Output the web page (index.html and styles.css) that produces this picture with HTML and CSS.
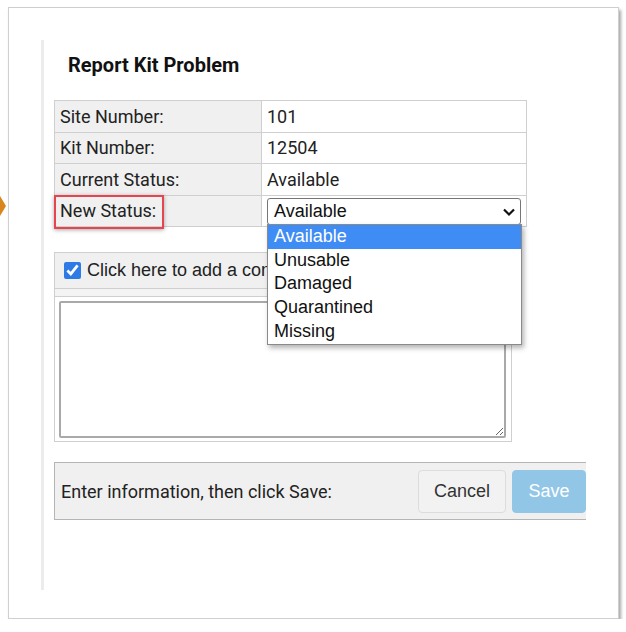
FILE: index.html
```html
<!DOCTYPE html>
<html>
<head>
<meta charset="utf-8">
<title>Report Kit Problem</title>
<link rel="stylesheet" href="styles.css">
</head>
<body>
	<div class="mark"></div>
	<div class="frame">
		<div class="panel">
			<h2 class="title">Report Kit Problem</h2>
			<table class="info">
				<tr>
					<td class="lbl">Site Number:</td>
					<td class="val">101</td>
				</tr>
				<tr>
					<td class="lbl">Kit Number:</td>
					<td class="val">12504</td>
				</tr>
				<tr>
					<td class="lbl">Current Status:</td>
					<td class="val">Available</td>
				</tr>
				<tr>
					<td class="lbl hilite">New Status:<span class="redbox"></span></td>
					<td class="val">
						<div class="select">
							<span>Available</span>
							<svg class="chev" width="14" height="10" viewBox="0 0 14 10"><path d="M2 2.5 L7 7.5 L12 2.5" fill="none" stroke="#111" stroke-width="2.2"/></svg>
							<ul class="options">
								<li class="sel">Available</li>
								<li>Unusable</li>
								<li>Damaged</li>
								<li>Quarantined</li>
								<li>Missing</li>
							</ul>
						</div>
					</td>
				</tr>
			</table>

			<div class="comment">
				<div class="comment-head">
					<input type="checkbox" checked> <span>Click here to add a comment</span>
				</div>
				<div class="comment-strip"></div>
				<textarea></textarea>
			</div>

			<div class="footer">
				<span class="hint">Enter information, then click Save:</span>
				<div class="btns">
					<button class="cancel">Cancel</button>
					<button class="save">Save</button>
				</div>
			</div>
		</div>
	</div>
</body>
</html>
```

FILE: styles.css
```css
body {
	margin: 0;
	background: #fff;
	font-family: Roboto, "Liberation Sans", sans-serif;
	color: #222;
}

.mark {
	position: absolute;
	left: 0;
	top: 196px;
	width: 0;
	height: 0;
	border-top: 10px solid transparent;
	border-bottom: 10px solid transparent;
	border-left: 6px solid #d9861c;
}

.frame {
	box-sizing: border-box;
	width: 611px;
	height: 612px;
	margin: 7px 0 0 8px;
	padding: 32px 0 0 32px;
	border: 1px solid #cfcfcf;
	box-shadow: 2px 3px 3px rgba(0, 0, 0, 0.35);
}

.panel {
	box-sizing: border-box;
	width: 545px;
	height: 550px;
	border-left: 3px solid #ececec;
	padding: 10px 0 0 10px;
	overflow: hidden;
}

.title {
	margin: 2px 0 22px 14px;
	font-size: 20px;
	line-height: 26px;
	font-weight: bold;
	color: #111;
}

.info {
	width: 473px;
	border-collapse: collapse;
	font-size: 18px;
}

.info td {
	height: 30.5px;
	padding: 0 5px;
	border: 1px solid #cfcfcf;
}

.info .lbl {
	width: 196px;
	background: #f0f0f0;
}

.hilite {
	position: relative;
}

.redbox {
	position: absolute;
	left: -1px;
	top: -1px;
	width: 106px;
	height: 30px;
	border: 2px solid #e6454f;
	box-shadow: 0 1px 4px rgba(0, 0, 0, 0.35);
}

.select {
	position: relative;
	box-sizing: border-box;
	width: 254px;
	height: 27px;
	margin-top: 1px;
	border: 1px solid #767676;
	border-radius: 3px;
	padding-left: 6px;
	font-family: "Liberation Sans", Arial, sans-serif;
	font-size: 18px;
	line-height: 25px;
	color: #111;
}

.chev {
	position: absolute;
	right: 4px;
	top: 8px;
}

.options {
	position: absolute;
	left: -1px;
	top: 25px;
	width: 253px;
	margin: 0;
	padding: 0;
	list-style: none;
	background: #fff;
	border: 1px solid #8a8a8a;
	box-shadow: 2px 3px 5px rgba(0, 0, 0, 0.3);
	z-index: 2;
}

.options li {
	height: 23.8px;
	line-height: 23px;
	padding-left: 6px;
}

.options li.sel {
	background: #3f8cf4;
	color: #fff;
}

.comment {
	box-sizing: border-box;
	width: 458px;
	margin-top: 25px;
	border: 1px solid #cfcfcf;
	padding-bottom: 3px;
}

.comment-head {
	height: 35px;
	display: flex;
	align-items: center;
	padding-left: 9px;
	background: #f0f0f0;
	border-bottom: 1px solid #cfcfcf;
	font-family: "Liberation Sans", Arial, sans-serif;
	font-size: 18px;
}

.comment-head input {
	width: 17px;
	height: 17px;
	margin: 0 6px 0 0;
	accent-color: #2f7be6;
}

.comment-strip {
	height: 7px;
	background: #f3f3f3;
	border-bottom: 1px solid #cfcfcf;
}

textarea {
	display: block;
	box-sizing: border-box;
	width: 447px;
	height: 137px;
	margin: 4px 0 0 4px;
	border: 2px solid #a9a9a9;
	border-radius: 2px;
	resize: both;
}

.footer {
	box-sizing: border-box;
	width: 560px;
	height: 58px;
	margin-top: 20px;
	display: flex;
	align-items: center;
	justify-content: space-between;
	padding: 0 6px 0 6px;
	background: #f0f0f0;
	border: 1px solid #b5b5b5;
	font-size: 18px;
}

.btns {
	display: flex;
	gap: 6px;
	padding-right: 21px;
}

.btns button {
	height: 43px;
	border-radius: 4px;
	font-family: "Liberation Sans", Arial, sans-serif;
	font-size: 18px;
}

.cancel {
	width: 88px;
	background: #f2f2f2;
	border: 1px solid #dcdcdc;
	color: #333;
}

.save {
	width: 74px;
	background: #92c6e6;
	border: 1px solid #92c6e6;
	color: #fff;
}
```
